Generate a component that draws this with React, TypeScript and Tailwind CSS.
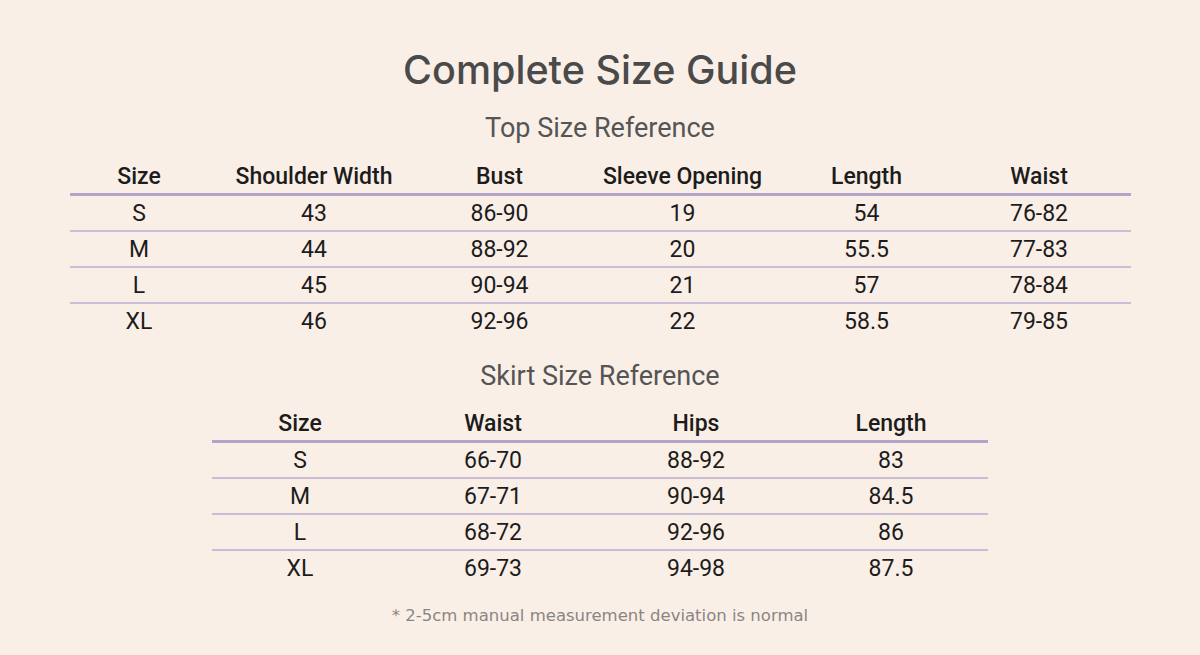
const topCols = ["Size", "Shoulder Width", "Bust", "Sleeve Opening", "Length", "Waist"];
const topRows = [
  ["S", "43", "86-90", "19", "54", "76-82"],
  ["M", "44", "88-92", "20", "55.5", "77-83"],
  ["L", "45", "90-94", "21", "57", "78-84"],
  ["XL", "46", "92-96", "22", "58.5", "79-85"],
];

const skirtCols = ["Size", "Waist", "Hips", "Length"];
const skirtRows = [
  ["S", "66-70", "88-92", "83"],
  ["M", "67-71", "90-94", "84.5"],
  ["L", "68-72", "92-96", "86"],
  ["XL", "69-73", "94-98", "87.5"],
];

function SizeTable({
  cols,
  rows,
  grid,
  width,
}: {
  cols: string[];
  rows: string[][];
  grid: string;
  width: string;
}) {
  return (
    <div className={width}>
      <div className={`grid ${grid} h-[37px] border-b-[3px] border-[#b3a5c9] items-center`}>
        {cols.map((c) => (
          <div key={c} className="text-center text-[23px] font-medium text-[#1c1c1c] leading-none">
            {c}
          </div>
        ))}
      </div>
      {rows.map((r, i) => (
        <div
          key={r[0]}
          className={`grid ${grid} items-center ${
            i < rows.length - 1 ? "h-[36px] border-b-2 border-[#cbbdd6]" : "h-[34px]"
          }`}
        >
          {r.map((v, j) => (
            <div key={j} className="text-center text-[23px] text-[#1c1c1c] leading-none">
              {v}
            </div>
          ))}
        </div>
      ))}
    </div>
  );
}

export default function App() {
  return (
    <div
      className="w-[1200px] h-[655px] bg-[#faefe6] flex flex-col items-center overflow-hidden"
      style={{ fontFamily: "Roboto, 'Liberation Sans', sans-serif" }}
    >
      <h1
        className="mt-[46px] text-[39.5px] leading-[48px] font-medium text-[#4a4a4a]"
        style={{ fontFamily: "Inter, Roboto, sans-serif" }}
      >
        Complete Size Guide
      </h1>
      <h2 className="mt-[18px] text-[27px] leading-[32px] text-[#555555]">Top Size Reference</h2>
      <div className="mt-[15px]">
        <SizeTable
          cols={topCols}
          rows={topRows}
          width="w-[1061px]"
          grid="grid-cols-[139px_211px_160px_206px_162px_183px]"
        />
      </div>
      <h2 className="mt-[22px] text-[27px] leading-[32px] text-[#555555]">Skirt Size Reference</h2>
      <div className="mt-[14px]">
        <SizeTable
          cols={skirtCols}
          rows={skirtRows}
          width="w-[776px]"
          grid="grid-cols-[176px_210px_196px_194px]"
        />
      </div>
      <p
        className="mt-[19px] text-[16.5px] leading-[24px] text-[#8a8583]"
        style={{ fontFamily: "'DejaVu Sans', sans-serif" }}
      >
        * 2-5cm manual measurement deviation is normal
      </p>
    </div>
  );
}
